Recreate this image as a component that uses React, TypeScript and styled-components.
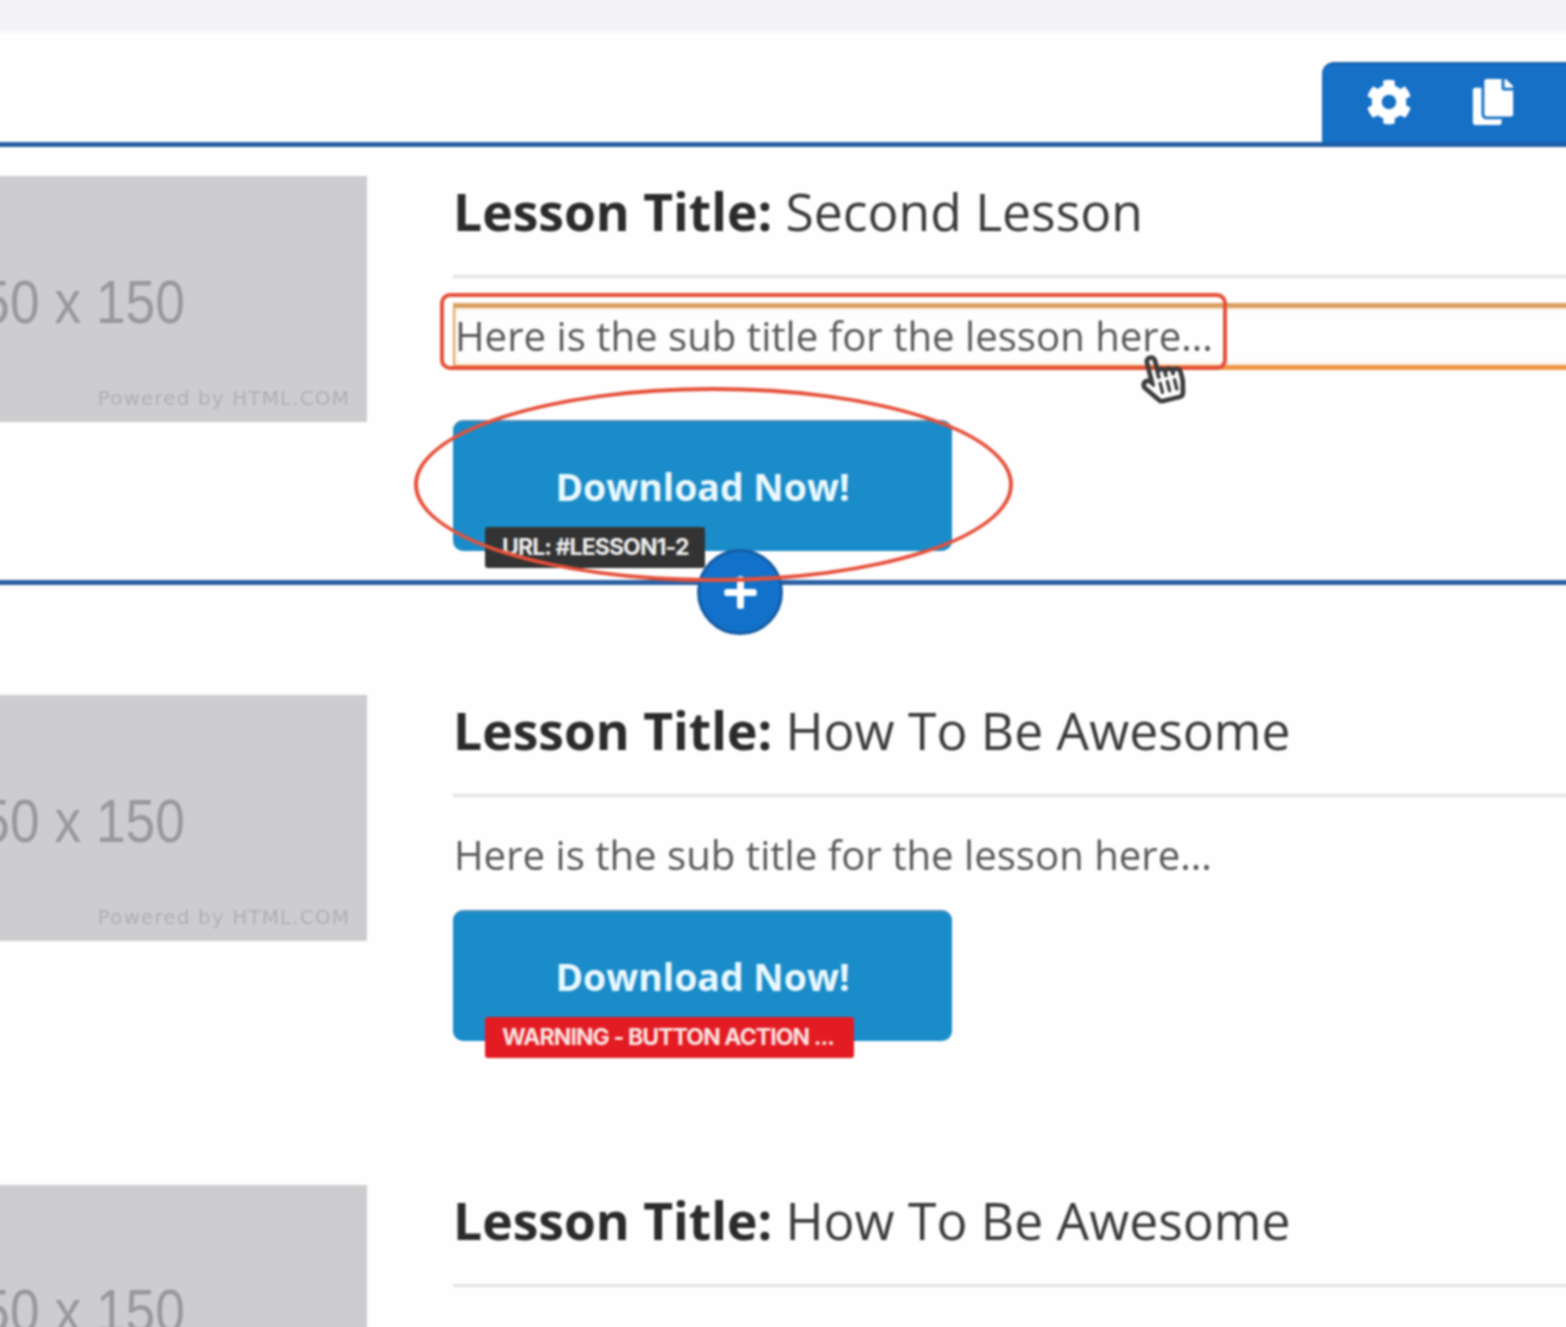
import React from 'react';
import styled, { createGlobalStyle } from 'styled-components';
import { FaCog, FaCopy, FaPlus, FaRegHandPointer } from 'react-icons/fa';

const GlobalStyle = createGlobalStyle`
  html, body {
    margin: 0;
    padding: 0;
    background: #fefefe;
    overflow: hidden;
  }
`;

// runs 8px past the window on each side so the blur doesn't fade the edges
const Page = styled.div`
  width: 1582px;
  height: 1343px;
  margin: -8px 0 0 -8px;
  overflow: hidden;
  font-family: 'Open Sans', sans-serif;
  color: #333;
  filter: blur(0.8px);
`;

const TopStrip = styled.div`
  height: 40px;
  background: #f4f4f7;
`;

const ToolbarRow = styled.div`
  height: 110px;
  display: flex;
  justify-content: flex-end;
  align-items: flex-end;
`;

const Toolbar = styled.div`
  position: relative;
  z-index: 1;
  width: 252px;
  height: 84px;
  margin-bottom: -4px;
  box-sizing: border-box;
  padding: 0 58px 2px 44px;
  display: flex;
  align-items: center;
  justify-content: space-between;
  color: #fff;
  background: #1570c6;
  border-top: 2px solid #1b5ea8;
  border-bottom: 4px solid #1b5ea8;
  border-top-left-radius: 12px;
`;

const LessonRow = styled.section<{ $active?: boolean }>`
  position: relative;
  display: grid;
  grid-template-columns: 375px 1fr;
  column-gap: 86px;
  align-items: start;
  padding: ${props => (props.$active ? '29px 0' : '110px 0 34px')};
  border-top: ${props => (props.$active ? '5px solid #2b5fa3' : 'none')};
  border-bottom: ${props => (props.$active ? '5px solid #2b5fa3' : 'none')};
`;

const Placeholder = styled.div`
  height: 246px;
  background: #cdcccf;
  color: #99989b;
  font-family: 'Liberation Sans', Arial, sans-serif;
  display: flex;
  flex-direction: column;
  align-items: flex-end;
  white-space: nowrap;
`;

const PlaceholderSize = styled.div`
  margin: 90px 182px 0 0;
  font-size: 62px;
  line-height: 72px;
  transform: scaleX(0.86);
  transform-origin: right center;
`;

const PlaceholderCredit = styled.div`
  margin: 48px 17px 0 0;
  font-family: 'DejaVu Sans', sans-serif;
  font-size: 20px;
  line-height: 24px;
  color: #b0afb2;
  letter-spacing: 1.1px;
`;

const Details = styled.div`
  min-width: 0;
`;

const Title = styled.h2`
  margin: 0;
  height: 99px;
  font-size: 51.6px;
  line-height: 70px;
  font-weight: 400;
  color: #3a3a3c;
  white-space: nowrap;
`;

const TitleLabel = styled.strong`
  font-weight: 700;
  color: #2b2b2d;
`;

const Divider = styled.div`
  height: 3px;
  background: #e2e2e2;
`;

const Subtitle = styled.div<{ $editing?: boolean }>`
  position: relative;
  box-sizing: border-box;
  height: ${props => (props.$editing ? '67px' : '60px')};
  margin: ${props => (props.$editing ? '25px 0 50px' : '28px 0 25px')};
  padding-left: ${props => (props.$editing ? '0' : '1px')};
  font-size: 40.15px;
  line-height: ${props => (props.$editing ? '56px' : '60px')};
  color: #58585c;
  white-space: nowrap;
  border-top: ${props => (props.$editing ? '5px solid #d9a063' : 'none')};
  border-bottom: ${props => (props.$editing ? '5px solid #ee9747' : 'none')};
  border-left: ${props => (props.$editing ? '2px solid #e2a469' : 'none')};
  box-shadow: ${props => (props.$editing ? 'inset 0 0 5px rgba(238, 151, 71, 0.35)' : 'none')};
`;

const RedBox = styled.div`
  position: absolute;
  left: -15px;
  top: -15px;
  width: 787px;
  height: 77px;
  box-sizing: border-box;
  border: 4px solid #e5503a;
  border-radius: 10px;
`;

const Pointer = styled.div`
  position: absolute;
  left: 682px;
  top: 45px;
  color: #3c3c3c;
  line-height: 0;
  transform: rotate(-14deg);
`;

const ButtonWrap = styled.div`
  position: relative;
  width: 499px;
`;

const DownloadButton = styled.button`
  display: block;
  width: 100%;
  height: 131px;
  padding: 0 2px 0 2px;
  border: 0;
  border-top: 2px solid #4b8db8;
  border-radius: 10px;
  background: #1a8cc9;
  color: #eaf8ff;
  font-family: 'Open Sans', sans-serif;
  font-size: 37.4px;
  font-weight: 700;
`;

const Tag = styled.div<{ $warning?: boolean }>`
  position: absolute;
  left: 32px;
  bottom: -17px;
  box-sizing: border-box;
  height: 41px;
  padding: 0 ${props => (props.$warning ? '20px' : '16px')} 0 17px;
  border-radius: 3px;
  background: ${props => (props.$warning ? '#e31b23' : '#333333')};
  color: ${props => (props.$warning ? '#fbe3e1' : '#eeeeee')};
  font-family: Inter, sans-serif;
  font-size: 23px;
  line-height: 41px;
  font-weight: 700;
  letter-spacing: -0.9px;
  white-space: nowrap;
`;

const RedEllipse = styled.div`
  position: absolute;
  z-index: 3;
  left: -39px;
  top: -33px;
  width: 599px;
  height: 195px;
  box-sizing: border-box;
  border: 4px solid #e5503a;
  border-radius: 50%;
`;

const AddButton = styled.button`
  position: absolute;
  z-index: 2;
  left: 705px;
  bottom: -55px;
  width: 86px;
  height: 86px;
  padding: 0;
  border: 3px solid #155ca6;
  border-radius: 50%;
  background: #1272cb;
  color: #fff;
  display: flex;
  align-items: center;
  justify-content: center;
`;

type Lesson = {
  name: string;
  tag?: string;
  warning?: boolean;
  active?: boolean;
};

const lessons: Lesson[] = [
  { name: 'Second Lesson', tag: 'URL: #LESSON1-2', active: true },
  { name: 'How To Be Awesome', tag: 'WARNING - BUTTON ACTION ...', warning: true },
  { name: 'How To Be Awesome' },
];

export default function App() {
  return (
    <Page>
      <GlobalStyle />
      <TopStrip />
      <ToolbarRow>
        <Toolbar>
          <FaCog size={46} />
          <FaCopy size={46} />
        </Toolbar>
      </ToolbarRow>

      {lessons.map((lesson, i) => (
        <LessonRow key={i} $active={lesson.active}>
          <Placeholder>
            <PlaceholderSize>50 x 150</PlaceholderSize>
            <PlaceholderCredit>Powered by HTML.COM</PlaceholderCredit>
          </Placeholder>
          <Details>
            <Title>
              <TitleLabel>Lesson Title:</TitleLabel> {lesson.name}
            </Title>
            <Divider />
            {i < 2 && (
              <Subtitle $editing={lesson.active}>
                Here is the sub title for the lesson here...
                {lesson.active && <RedBox />}
                {lesson.active && (
                  <Pointer>
                    <FaRegHandPointer size={50} />
                  </Pointer>
                )}
              </Subtitle>
            )}
            {i < 2 && (
              <ButtonWrap>
                <DownloadButton>Download Now!</DownloadButton>
                {lesson.tag && <Tag $warning={lesson.warning}>{lesson.tag}</Tag>}
                {lesson.active && <RedEllipse />}
              </ButtonWrap>
            )}
          </Details>
          {lesson.active && (
            <AddButton>
              <FaPlus size={37} />
            </AddButton>
          )}
        </LessonRow>
      ))}
    </Page>
  );
}
